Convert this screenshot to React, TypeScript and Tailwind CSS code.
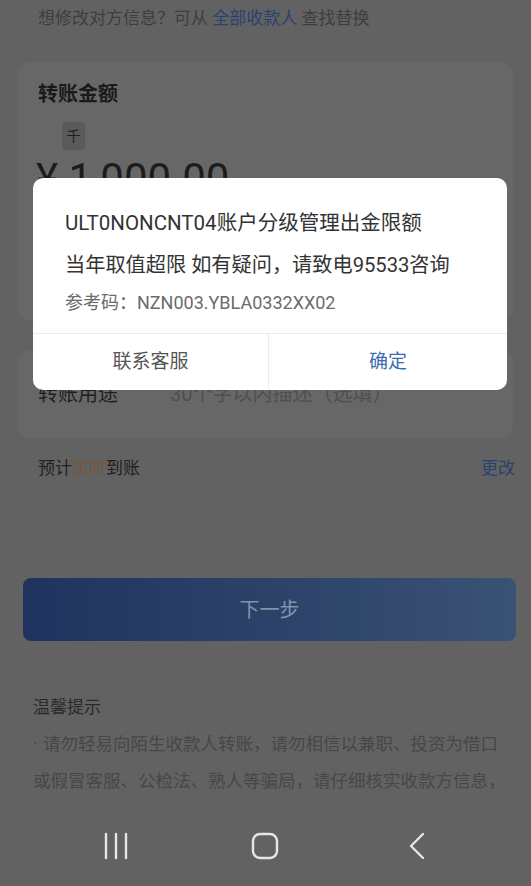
import React from "react";

const NavBar = () => (
  <div className="mt-auto shrink-0 h-[80px] flex items-center pl-[103px] text-[#e6e6e6]">
    <svg width="26" height="28" viewBox="0 0 26 28" fill="none" stroke="currentColor" strokeWidth="2.4" strokeLinecap="round">
      <path d="M3 2v24M13 2v24M23 2v24" />
    </svg>
    <svg className="ml-[122px]" width="28" height="28" viewBox="0 0 28 28" fill="none" stroke="currentColor" strokeWidth="2.4">
      <rect x="2" y="2" width="24" height="24" rx="7" />
    </svg>
    <svg className="ml-[128px]" width="20" height="28" viewBox="0 0 20 28" fill="none" stroke="currentColor" strokeWidth="2.4" strokeLinecap="round" strokeLinejoin="round">
      <path d="M16 2L4 14l12 12" />
    </svg>
  </div>
);

const Dialog = () => (
  <div className="absolute left-[33px] top-[178px] w-[474px] rounded-[10px] bg-white overflow-hidden">
    <div className="px-[32px] pt-[31px] pb-[18px]">
      <p className="text-[20.5px] leading-[28px] text-[#333]">ULT0NONCNT04账户分级管理出金限额</p>
      <p className="mt-[14px] text-[20.2px] leading-[28px] text-[#333]">当年取值超限 如有疑问，请致电95533咨询</p>
      <p className="mt-[12px] text-[18px] leading-[24px] text-[#6b6b6b]">参考码：NZN003.YBLA0332XX02</p>
    </div>
    <div className="flex h-[57px] border-t border-[#ececec]">
      <button className="w-[236px] border-r border-[#ececec] text-[19px] text-[#555]">联系客服</button>
      <button className="flex-1 text-[19px] text-[#3b6cb0]">确定</button>
    </div>
  </div>
);

export default function App() {
  return (
    <div
      className="relative w-[531px] h-[886px] bg-[#626262] overflow-hidden flex flex-col"
      style={{ fontFamily: 'Roboto, "Noto Sans CJK SC", sans-serif' }}
    >
      <div className="shrink-0 h-[38px] flex items-center px-[38px] text-[17px] text-[#3e3e3e]">
        想修改对方信息？可从&nbsp;<span className="text-[#2b4170]">全部收款人</span>&nbsp;查找替换
      </div>

      <div className="shrink-0 mt-[24px] mx-[18px] h-[258px] rounded-[12px] bg-[#676767] px-[20px] pt-[18px]">
        <p className="text-[20px] leading-[28px] font-bold text-[#1a1a1a]">转账金额</p>
        <div className="mt-[14px] ml-[24px] w-[23px] h-[28px] rounded-[3px] bg-[#5a5a5a] flex items-center justify-center text-[14px] text-[#1e1e1e]">
          千
        </div>
        <p className="mt-[6px] -ml-[2px] text-[42px] leading-[46px] text-[#1c1c1c]">¥ 1,000.00</p>
      </div>

      <div className="shrink-0 mt-[30px] mx-[18px] h-[88px] rounded-[12px] bg-[#676767] px-[20px] flex items-center text-[20px]">
        <span className="w-[132px] text-[#1f1f1f]">转账用途</span>
        <span className="text-[#4f4f4f]">30个字以内描述（选填）</span>
      </div>

      <div className="shrink-0 h-[62px] flex items-center justify-between pl-[38px] pr-[16px] text-[17px]">
        <span className="text-[#1f1f1f]">
          预计<span className="text-[#7a5535]">实时</span>到账
        </span>
        <span className="text-[#2b4170]">更改</span>
      </div>

      <button className="shrink-0 mt-[78px] ml-[23px] mr-[15px] h-[63px] rounded-[8px] bg-gradient-to-r from-[#1f335e] to-[#3a5274] text-[20px] text-[#8593ab]">
        下一步
      </button>

      <div className="shrink-0 mt-[48px] px-[33px] leading-[37px] whitespace-nowrap">
        <p className="text-[17px] text-[#2a2a2a]">温馨提示</p>
        <p className="text-[17.5px] text-[#474747]">
          <span className="inline-block w-[10px]">·</span>请勿轻易向陌生收款人转账，请勿相信以兼职、投资为借口
        </p>
        <p className="text-[17.5px] text-[#474747]">或假冒客服、公检法、熟人等骗局，请仔细核实收款方信息，</p>
      </div>

      <NavBar />

      <Dialog />
    </div>
  );
}
